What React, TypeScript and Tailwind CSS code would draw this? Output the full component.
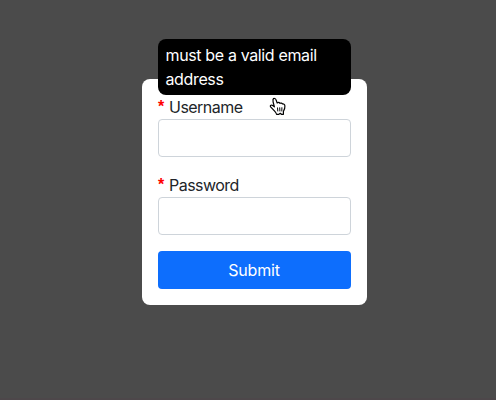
function Field({ label, tip, type }: { label: string; tip?: string; type: string }) {
  return (
    <div className="relative mb-4">
      <label className="flex h-6 items-center leading-6">
        <span className="w-[11px] pb-px font-['Liberation_Sans',sans-serif] text-[16px] font-bold text-[#f00]">*</span>
        <span>{label}</span>
      </label>
      <input
        type={type}
        className="block h-[38px] w-full rounded border border-[#ced4da] bg-white px-3 outline-none"
      />
      {tip && (
        <div className="absolute bottom-full left-0 w-full rounded-lg bg-black py-1 pl-[7.5px] pr-2 leading-6 tracking-[-0.36px] text-white">
          {tip}
        </div>
      )}
    </div>
  );
}

function HandCursor() {
  return (
    <svg
      className="absolute left-[269px] top-[97px]"
      width="18"
      height="19"
      viewBox="0 0 18 19"
      fill="none"
    >
      <path
        d="M4 2.5C4.5 1 6.6 1.2 7 2.7L8.2 6C9.2 5.3 10.5 5.6 11 6.3C11.9 5.8 13.1 6.2 13.5 7C15 6.8 15.8 7.5 15.9 9C16.1 11.5 15.4 12.8 14.4 14.5V17.3H12.4L11.3 16.3L9.9 17.3H7.6C7.2 15.5 5.3 13.9 4 12.4L1.6 9.9C0.7 8.8 2 7.6 3.3 8.3L5.4 9.8L4.1 5Z"
        fill="white"
        stroke="black"
        strokeWidth="1.2"
        strokeLinejoin="round"
      />
      <path d="M8.5 10.5L8.8 14.4M10.7 10.4L10.9 14.4M12.9 10.3L12.8 14.4" stroke="black" />
    </svg>
  );
}

export default function App() {
  return (
    <div className="relative flex h-[400px] w-[496px] flex-col items-start border-b-2 border-[#4d474a] bg-[#4b4b4b] pl-[142px] pt-[79px] font-['Inter','Liberation_Sans',sans-serif] text-[16px] tracking-[-0.52px] text-[#212529]">
      <form className="w-[225px] rounded-lg bg-white p-4" onSubmit={(e) => e.preventDefault()}>
        <Field label="Username" type="text" tip="must be a valid email address" />
        <Field label="Password" type="password" />
        <button
          type="submit"
          className="block h-[38px] w-full rounded bg-[#0d6efd] pr-px tracking-[-0.2px] text-white"
        >
          Submit
        </button>
      </form>
      <HandCursor />
    </div>
  );
}
